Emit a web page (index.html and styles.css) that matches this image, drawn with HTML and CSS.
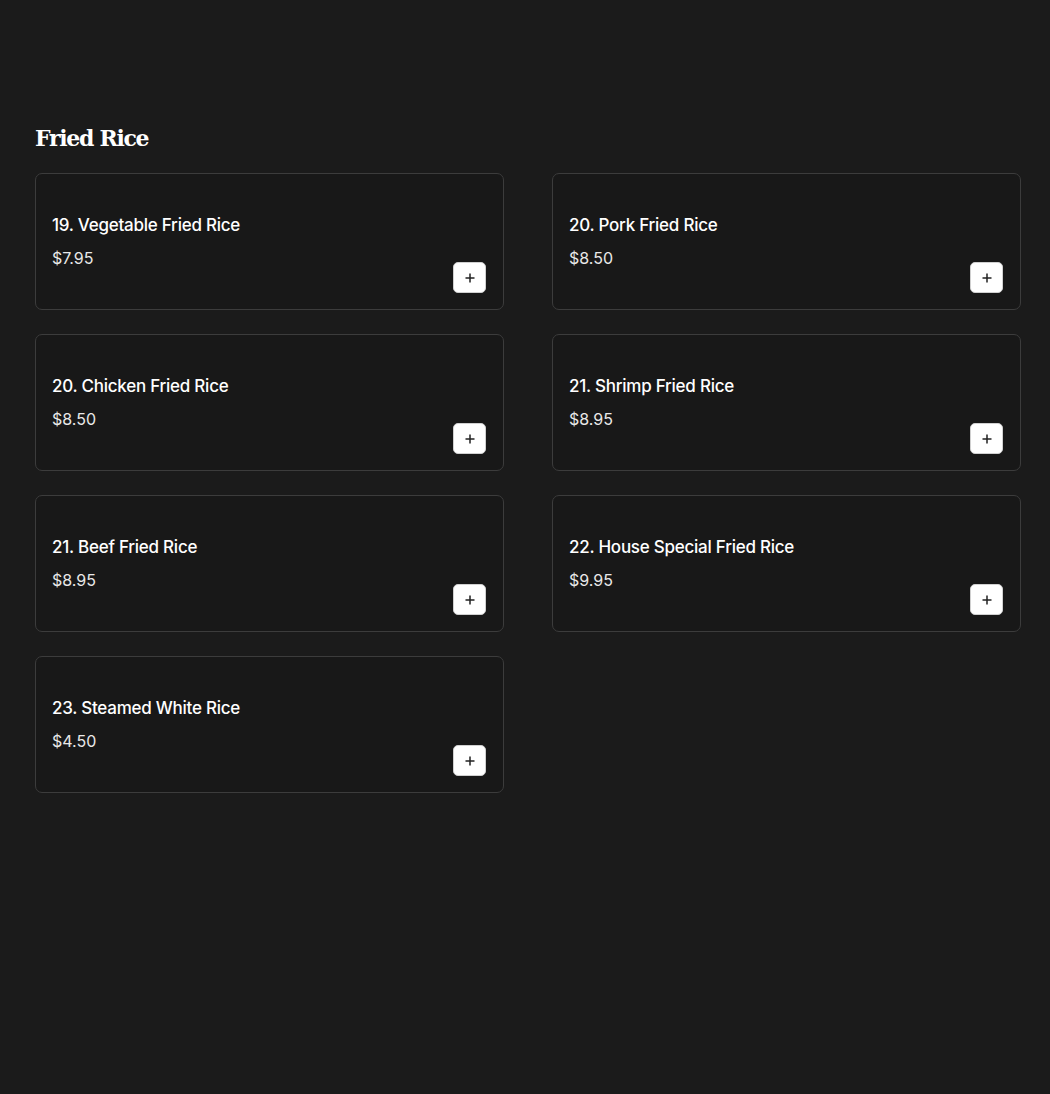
FILE: index.html
```html
<!DOCTYPE html>
<html lang="en">
<head>
<meta charset="utf-8">
<title>Fried Rice</title>
<link rel="stylesheet" href="styles.css">
</head>
<body>
<main class="page">
  <section class="category">
    <h2 class="category-title">Fried Rice</h2>
    <div class="grid">
      <div class="card"><div class="info"><div class="name">19. Vegetable Fried Rice</div><div class="price">$7.95</div></div><button class="add" aria-label="Add"><svg viewBox="0 0 12 12" width="12" height="12"><path d="M6 1.5v9M1.5 6h9" stroke="#222" stroke-width="1.5" fill="none"/></svg></button></div>
      <div class="card"><div class="info"><div class="name">20. Pork Fried Rice</div><div class="price">$8.50</div></div><button class="add" aria-label="Add"><svg viewBox="0 0 12 12" width="12" height="12"><path d="M6 1.5v9M1.5 6h9" stroke="#222" stroke-width="1.5" fill="none"/></svg></button></div>
      <div class="card"><div class="info"><div class="name">20. Chicken Fried Rice</div><div class="price">$8.50</div></div><button class="add" aria-label="Add"><svg viewBox="0 0 12 12" width="12" height="12"><path d="M6 1.5v9M1.5 6h9" stroke="#222" stroke-width="1.5" fill="none"/></svg></button></div>
      <div class="card"><div class="info"><div class="name">21. Shrimp Fried Rice</div><div class="price">$8.95</div></div><button class="add" aria-label="Add"><svg viewBox="0 0 12 12" width="12" height="12"><path d="M6 1.5v9M1.5 6h9" stroke="#222" stroke-width="1.5" fill="none"/></svg></button></div>
      <div class="card"><div class="info"><div class="name">21. Beef Fried Rice</div><div class="price">$8.95</div></div><button class="add" aria-label="Add"><svg viewBox="0 0 12 12" width="12" height="12"><path d="M6 1.5v9M1.5 6h9" stroke="#222" stroke-width="1.5" fill="none"/></svg></button></div>
      <div class="card"><div class="info"><div class="name">22. House Special Fried Rice</div><div class="price">$9.95</div></div><button class="add" aria-label="Add"><svg viewBox="0 0 12 12" width="12" height="12"><path d="M6 1.5v9M1.5 6h9" stroke="#222" stroke-width="1.5" fill="none"/></svg></button></div>
      <div class="card"><div class="info"><div class="name">23. Steamed White Rice</div><div class="price">$4.50</div></div><button class="add" aria-label="Add"><svg viewBox="0 0 12 12" width="12" height="12"><path d="M6 1.5v9M1.5 6h9" stroke="#222" stroke-width="1.5" fill="none"/></svg></button></div>
    </div>
  </section>
</main>
</body>
</html>
```
FILE: styles.css
```css
html, body {
  margin: 0;
  padding: 0;
  background: #1b1b1b;
  color: #ffffff;
  font-family: "Inter", "Noto Sans", sans-serif;
}

.page {
  padding: 124px 30px 0 35px;
  min-height: 1094px;
  box-sizing: border-box;
}

.category-title {
  margin: 0 0 21px 0;
  font-family: "DejaVu Serif", serif;
  font-weight: 700;
  font-size: 22px;
  line-height: 28px;
  letter-spacing: -1.3px;
  color: #ffffff;
}

.grid {
  display: grid;
  grid-template-columns: 469px 469px;
  column-gap: 48px;
  row-gap: 24px;
}

.card {
  box-sizing: border-box;
  height: 137px;
  border: 1px solid #3c3c3c;
  border-radius: 7px;
  background: #181818;
  padding: 0 17px 16px 16px;
  display: flex;
  justify-content: space-between;
  align-items: flex-end;
}

.info {
  align-self: flex-start;
  padding-top: 40px;
}

.name {
  font-size: 17px;
  font-weight: 500;
  line-height: 22px;
  letter-spacing: -0.25px;
  color: #ffffff;
}

.price {
  margin-top: 12px;
  font-size: 16px;
  font-weight: 400;
  line-height: 20px;
  color: #e8e8e8;
}

.add {
  width: 33px;
  height: 31px;
  border: 1px solid #d0d0d0;
  border-radius: 5px;
  background: #ffffff;
  display: flex;
  align-items: center;
  justify-content: center;
  padding: 0;
  cursor: pointer;
}
```
